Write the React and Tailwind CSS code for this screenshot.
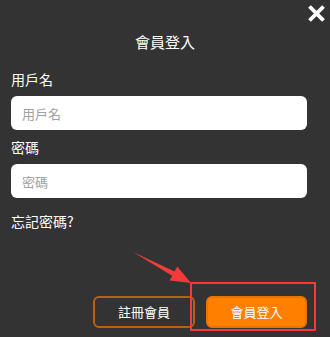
export default function App() {
  const font = { fontFamily: '"Noto Sans CJK TC", "Noto Sans", sans-serif' };
  return (
    <div className="relative w-[330px] h-[337px] bg-[#333333] overflow-hidden" style={font}>
      {/* close button */}
      <button className="absolute right-[5px] top-[5px] w-[17px] h-[17px] flex items-center justify-center">
        <svg viewBox="0 0 18 18" className="w-[17px] h-[17px]">
          <path d="M3 3 L15 15 M15 3 L3 15" stroke="#ffffff" strokeWidth="4" strokeLinecap="square" />
        </svg>
      </button>

      <div className="flex flex-col px-[11px] pt-[31px]">
        <h2 className="text-center text-white text-[15px] leading-[22px]">會員登入</h2>

        <label className="mt-[16px] text-white text-[14px] leading-[20px]">用戶名</label>
        <input
          placeholder="用戶名"
          className="mt-[7px] w-[296px] h-[34px] rounded-[6px] bg-white px-[11px] text-[13px] text-gray-700 placeholder:text-[#a0a0a0] outline-none"
        />

        <label className="mt-[7px] text-white text-[14px] leading-[20px]">密碼</label>
        <input
          type="password"
          placeholder="密碼"
          className="mt-[7px] w-[296px] h-[34px] rounded-[6px] bg-white px-[11px] text-[13px] text-gray-700 placeholder:text-[#a0a0a0] outline-none"
        />

        <p className="mt-[13px] text-white text-[14px] leading-[20px]">忘記密碼?</p>

        <div className="mt-[65px] flex justify-end gap-[11px] pr-[12px]">
          <button className="w-[102px] h-[32px] rounded-[6px] border-2 border-[#b8620e] text-white text-[13px]">
            註冊會員
          </button>
          <button className="w-[101px] h-[32px] rounded-[6px] bg-[#ff8000] border-2 border-[#e97500] text-white text-[13px]">
            會員登入
          </button>
        </div>
      </div>

      {/* annotation */}
      <div className="absolute left-[190px] top-[282px] w-[126px] h-[49px] border-2 border-[#f23c3c]" />
      <svg className="absolute left-0 top-0 pointer-events-none" width="330" height="337">
        <polygon
          points="133,252 174.6,271.4 177.2,266.6 191,283 169.6,280.6 172.2,275.8"
          fill="#f23c3c"
        />
      </svg>
    </div>
  );
}
